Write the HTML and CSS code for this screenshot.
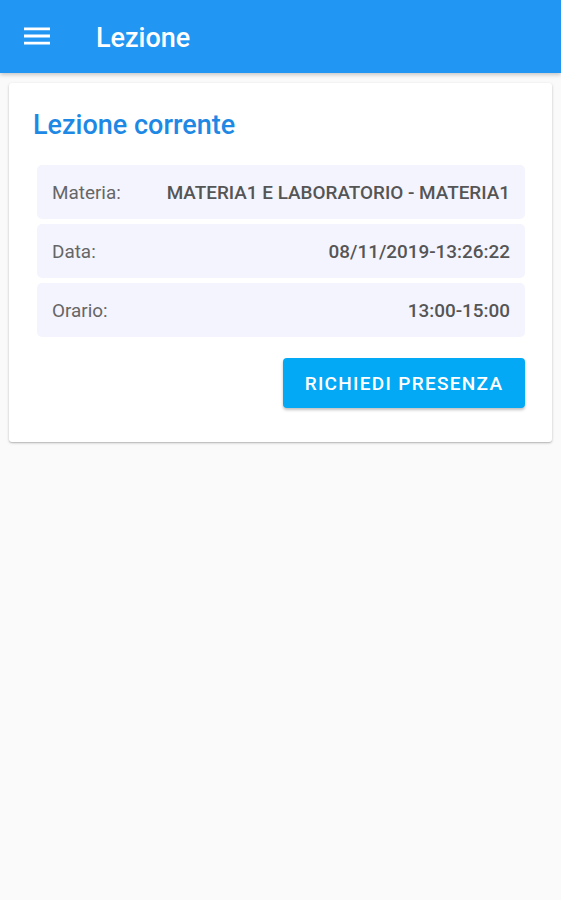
FILE: index.html
```html
<!DOCTYPE html>
<html lang="it">
<head>
    <meta charset="UTF-8">
    <meta name="viewport" content="width=device-width, initial-scale=1.0">
    <title>Lezione</title>
    <link rel="stylesheet" href="styles.css">
</head>
<body>
    <header class="appbar">
        <button class="menu-btn" aria-label="Menu">
            <svg width="28" height="20" viewBox="0 0 28 20">
                <path d="M1 1.5h26v2.8H1zM1 8.6h26v2.8H1zM1 15.7h26v2.8H1z" fill="#fff"/>
            </svg>
        </button>
        <span class="appbar-title">Lezione</span>
    </header>

    <main class="content">
        <div class="card">
            <h2>Lezione corrente</h2>
            <div class="info-list">
                <div class="info-row">
                    <span class="label">Materia:</span>
                    <span class="value">MATERIA1 E LABORATORIO - MATERIA1</span>
                </div>
                <div class="info-row">
                    <span class="label">Data:</span>
                    <span class="value">08/11/2019-13:26:22</span>
                </div>
                <div class="info-row">
                    <span class="label">Orario:</span>
                    <span class="value">13:00-15:00</span>
                </div>
            </div>
            <div class="actions">
                <button class="primary">Richiedi presenza</button>
            </div>
        </div>
    </main>
</body>
</html>
```

FILE: styles.css
```css
:root {
    --primary: #2196f3;
    --accent: #03a9f4;
    --row-bg: #f4f4fe;
    --text: #555;
}
html, body {
    margin: 0;
    height: 100%;
}
body {
    font-family: Roboto, 'Noto Sans', sans-serif;
    background: #fafafa;
    color: var(--text);
}
.appbar {
    height: 73px;
    background: var(--primary);
    display: flex;
    align-items: center;
    padding: 0 0 0 23px;
    box-shadow: 0 2px 4px rgba(0,0,0,0.2);
    position: relative;
    z-index: 1;
}
.menu-btn {
    background: none;
    border: none;
    padding: 0;
    width: 28px;
    height: 32px;
    display: flex;
    align-items: center;
    justify-content: center;
    margin-right: 45px;
    margin-top: -1px;
}
.appbar-title {
    color: #fff;
    font-size: 27px;
    font-weight: 500;
    margin-top: 2px;
}
.content {
    padding: 10px 9px;
}
.card {
    background: #fff;
    border-radius: 3px;
    box-shadow: 0 1px 3px rgba(0,0,0,0.2), 0 1px 1px rgba(0,0,0,0.12);
    padding: 26px 27px 34px 24px;
}
.card h2 {
    margin: 0 0 24px;
    color: #1e88e5;
    font-size: 27px;
    font-weight: 500;
    line-height: 32px;
}
.info-list {
    display: flex;
    flex-direction: column;
    gap: 5px;
    margin-left: 4px;
}
.info-row {
    display: flex;
    justify-content: space-between;
    align-items: center;
    height: 54px;
    padding: 0 15px 0 15px;
    background: var(--row-bg);
    border-radius: 5px;
    font-size: 18.9px;
}
.label {
    color: #666;
}
.value {
    font-weight: 500;
    color: #555;
}
.actions {
    display: flex;
    justify-content: flex-end;
    margin-top: 21px;
}
button.primary {
    background: var(--accent);
    color: #fff;
    border: none;
    border-radius: 4px;
    height: 50px;
    width: 242px;
    font-family: Roboto, sans-serif;
    font-size: 19px;
    font-weight: 500;
    letter-spacing: 1.3px;
    text-transform: uppercase;
    box-shadow: 0 2px 3px rgba(0,0,0,0.25);
    cursor: pointer;
}
```
